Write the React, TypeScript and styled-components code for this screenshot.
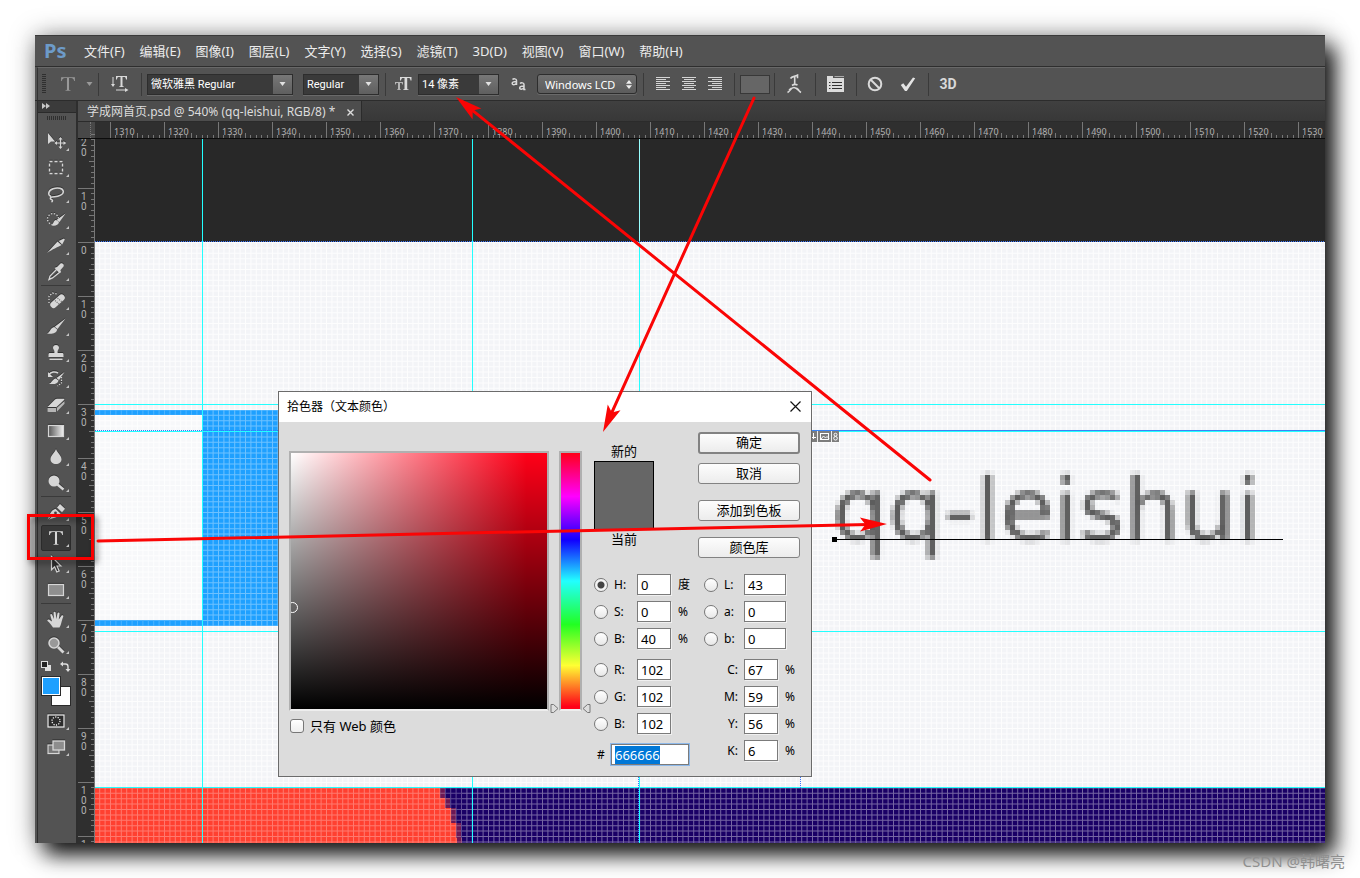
import React, { useEffect, useLayoutEffect, useRef, useState } from "react";
import styled, { createGlobalStyle, css } from "styled-components";

const GlobalStyle = createGlobalStyle`
  *, *::before, *::after { box-sizing: border-box; }
  body { margin: 0; background: #fff; font-family: "Noto Sans", "Noto Sans CJK SC", sans-serif; }
  button, input, select { font: inherit; color: inherit; margin: 0; padding: 0; }
`;

const Page = styled.div`
  display: flex;
  flex-direction: column;
  min-height: 100vh;
  padding: 35px 35px 0;
  overflow: hidden;
`;

const Frame = styled.main`
  position: relative;
  z-index: 0;
  flex: 1;
  display: flex;
  flex-direction: column;
  background: #535353;
  color: #e6e6e6;
  box-shadow: 10px 12px 20px rgba(0, 0, 0, 0.9), 0 0 24px rgba(0, 0, 0, 0.35);
`;

const Footer = styled.footer`
  position: relative;
  height: 35px;
  margin-right: -20px;
  padding-top: 8px;
  text-align: right;
  font-size: 15px;
  line-height: 20px;
  color: #8f8f8f;
`;

/* ---------- menu bar ---------- */

const MenuBar = styled.nav`
  display: flex;
  align-items: center;
  height: 32px;
  padding-left: 9px;
  border-top: 1px solid #3a3a3a;
  border-bottom: 1px solid #2e2e2e;
`;

const Logo = styled.span`
  width: 32px;
  font-size: 20px;
  line-height: 28px;
  font-weight: 700;
  color: #6d9bc9;
`;

const MenuList = styled.div`
  display: flex;
  gap: 15px;
  padding-left: 8px;
`;

const MenuItem = styled.button`
  border: 0;
  background: none;
  font-size: 13px;
  line-height: 20px;
  white-space: nowrap;
  color: #ececec;
`;

/* ---------- options bar ---------- */

const OptionsBar = styled.div`
  display: flex;
  align-items: center;
  height: 33px;
  padding-left: 4px;
  margin-left: 2px;
  border-top: 1px solid #686868;
  border-left: 1px solid #333;
  font-family: Roboto, "Noto Sans CJK SC", sans-serif;
  font-size: 11px;
`;

const Divider = styled.span<{ $l?: number; $r?: number }>`
  width: 1px;
  height: 23px;
  background: #3a3a3a;
  margin-left: ${(p) => p.$l ?? 6}px;
  margin-right: ${(p) => p.$r ?? 6}px;
`;

const IconButton = styled.button<{ $w?: number }>`
  display: flex;
  align-items: center;
  justify-content: center;
  width: ${(p) => p.$w ?? 26}px;
  height: 26px;
  border: 0;
  background: none;
  color: #d8d8d8;
`;

const ComboShell = styled.span<{ $w: number }>`
  position: relative;
  display: block;
  width: ${(p) => p.$w}px;
  height: 21px;
  border: 1px solid #2d2d2d;
  box-shadow: 0 1px 0 #6a6a6a;
  background: #3a3a3a;
  & + & {
    margin-left: 10px;
  }
`;

const ComboSelect = styled.select`
  display: block;
  width: 100%;
  height: 19px;
  padding-left: 3px;
  border: 0;
  border-radius: 0;
  appearance: none;
  background: transparent;
  color: #fff;
  outline: 0;
`;

const ComboArrow = styled.span`
  position: absolute;
  top: 0;
  right: 0;
  bottom: 0;
  display: flex;
  align-items: center;
  justify-content: center;
  width: 19px;
  background: linear-gradient(#777, #5f5f5f);
  pointer-events: none;
`;

const SmoothingSelect = styled(ComboSelect)`
  padding-left: 7px;
  font-family: "Noto Sans", sans-serif;
`;

const SmoothingShell = styled(ComboShell)`
  height: 20px;
  border-radius: 3px;
  background: linear-gradient(#6f6f6f, #5c5c5c);
`;

const SmoothingArrow = styled(ComboArrow)`
  width: 14px;
  background: none;
`;

const ColorChip = styled.button`
  width: 30px;
  height: 19px;
  border: 1px solid #383838;
  background: #666;
`;

const ThreeD = styled.span`
  font-weight: 700;
  font-size: 14px;
`;

/* ---------- tool column ---------- */

const Body = styled.div`
  flex: 1;
  display: flex;
  min-height: 0;
  border-top: 1px solid #2c2c2c;
`;

const ToolColumn = styled.aside`
  display: flex;
  flex-direction: column;
  align-items: stretch;
  width: 41px;
  margin-left: 2px;
  border-left: 1px solid #2e2e2e;
  border-right: 2px solid #2e2e2e;
`;

const ToolHeader = styled.div`
  height: 12px;
  padding: 1px 4px;
  display: flex;
  background: #3b3b3b;
  border-bottom: 1px solid #2a2a2a;
`;

const Grip = styled.div`
  height: 4px;
  width: 19px;
  margin: 3px 9px 9px;
  background: repeating-linear-gradient(90deg, #2f2f2f 0 1px, transparent 1px 2px);
`;

const VGrip = styled.span`
  width: 4px;
  height: 20px;
  margin-right: 3px;
  background: repeating-linear-gradient(#2f2f2f 0 1px, transparent 1px 2px);
`;

const ToolGroup = styled.div`
  display: flex;
  flex-direction: column;
  margin: 0 5px 0 3px;
  & + & {
    border-top: 1px solid #3a3a3a;
    padding-top: 2px;
  }
`;

const ToolButton = styled.button<{ $active?: boolean }>`
  position: relative;
  display: flex;
  align-items: center;
  justify-content: center;
  height: 26px;
  border: 1px solid transparent;
  border-radius: 2px;
  background: none;
  color: #d6d6d6;
  svg { filter: drop-shadow(0 -1px 0 #333); }
  ${(p) =>
    p.$active &&
    css`
      border-color: #2b2b2b;
      background: #383838;
    `}
  &::after {
    content: "";
    position: absolute;
    right: 1px;
    bottom: 3px;
    border-left: 3px solid transparent;
    border-bottom: 3px solid #c4c4c4;
  }
`;

const MiniRow = styled.div`
  display: flex;
  justify-content: space-between;
  height: 18px;
  padding: 3px 5px 0 3px;
`;

const SwatchArea = styled.div`
  position: relative;
  height: 32px;
`;

const Swatch = styled.button<{ $color: string; $front?: boolean }>`
  position: absolute;
  left: ${(p) => (p.$front ? 3 : 13)}px;
  top: ${(p) => (p.$front ? 0 : 10)}px;
  width: 20px;
  height: 20px;
  border: 1px solid #2a2a2a;
  background: ${(p) => p.$color};
  box-shadow: inset 0 0 0 1px #fff;
`;

/* ---------- document ---------- */

const Workspace = styled.section`
  flex: 1;
  min-width: 0;
  display: flex;
  flex-direction: column;
`;

const TabBar = styled.div`
  display: flex;
  height: 21px;
  background: linear-gradient(#404040, #383838);
  border-bottom: 1px solid #2b2b2b;
`;

const Tab = styled.div`
  display: flex;
  align-items: center;
  gap: 12px;
  width: 284px;
  padding: 2px 0 0 9px;
  border-right: 1px solid #2b2b2b;
  background: #4d4d4d;
  font-size: 12px;
  line-height: 18px;
  white-space: nowrap;
  color: #dcdcdc;
`;

const TabClose = styled.button`
  display: flex;
  border: 0;
  background: none;
  color: #ddd;
`;

const RulerRow = styled.div`
  display: flex;
  height: 17px;
  background: #2f2f2f;
  border-bottom: 1px solid #0c0c0c;
`;

const Corner = styled.div`
  width: 17px;
  background: #484848;
  display: flex;
  justify-content: flex-end;
  &::after {
    content: "";
    width: 5px;
    border-left: 1px dotted #777;
    background: linear-gradient(#777, #777) 0 12px / 100% 1px no-repeat;
  }
`;

const HRuler = styled.div`
  flex: 1;
  min-width: 0;
  display: flex;
  overflow: hidden;
  padding-left: 15px;
`;

const HUnit = styled.div`
  position: relative;
  flex: 0 0 54px;
  padding-left: 3px;
  border-left: 1px solid #777;
  font-size: 9px;
  line-height: 20px;
  color: #b2b2b2;
`;

const Ticks = styled.svg`
  position: absolute;
  right: 0;
  bottom: 0;
`;

const DocRow = styled.div`
  flex: 1;
  min-height: 0;
  display: flex;
`;

const VRuler = styled.div`
  contain: size;
  width: 17px;
  overflow: hidden;
  background: #2f2f2f;
  border-right: 1px solid #777;
`;

const VUnit = styled.div`
  position: relative;
  height: 54px;
  padding: 3px 0 0 3px;
  border-top: 1px solid #777;
  font-family: Roboto, sans-serif;
  font-size: 10px;
  line-height: 10px;
  color: #b2b2b2;
  &:first-child { margin-top: -5px; }
  span { display: block; }
`;

const Canvas = styled.div`
  position: relative;
  flex: 1;
  min-width: 0;
  overflow: hidden;
  background: #282828;
`;

const Artwork = styled.svg`
  position: absolute;
  inset: 0;
  width: 100%;
  height: 100%;
`;

/* ---------- colour picker ---------- */

const Dialog = styled.div`
  position: absolute;
  left: 183px;
  top: 252px;
  width: 534px;
  border: 1px solid #6b6b6b;
  background: #dcdcdc;
  color: #000;
  font-size: 12px;
`;

const DialogTitle = styled.header`
  display: flex;
  align-items: center;
  justify-content: space-between;
  height: 30px;
  padding: 0 9px 2px 8px;
  background: #fff;
`;

const CloseButton = styled.button`
  display: flex;
  border: 0;
  background: none;
`;

const DialogBody = styled.div`
  display: flex;
  align-items: flex-start;
  gap: 10px;
  padding: 10px 11px 11px 10px;
`;

const FieldColumn = styled.div`
  flex: none;
  width: 260px;
  padding-top: 19px;
`;

const ColorField = styled.div`
  position: relative;
  height: 260px;
  overflow: hidden;
  border: 2px solid #b0b0b0;
  border-bottom-color: #eee;
  background: linear-gradient(transparent, #000), linear-gradient(90deg, #fff, #ff0018 92%);
`;

const Marker = styled.span`
  position: absolute;
  left: -4px;
  top: 149px;
  width: 11px;
  height: 11px;
  border: 1px solid #fff;
  border-radius: 50%;
`;

const WebOnly = styled.label`
  display: flex;
  align-items: center;
  gap: 6px;
  padding: 6px 0 0 1px;
  font-size: 13px;
  line-height: 18px;
`;

const Check = styled.input`
  appearance: none;
  width: 14px;
  height: 14px;
  border: 1px solid #777;
  border-radius: 3px;
  background: linear-gradient(#fff, #eee);
`;

const HueColumn = styled.div`
  position: relative;
  flex: none;
  width: 23px;
  margin-top: 19px;
`;

const HueBar = styled.div`
  height: 260px;
  border: 2px solid #b0b0b0;
  border-bottom-color: #eee;
  background: linear-gradient(#ff0018, #f0f 17%, #10f 34%, #2ff 50%, #2f2 67%, #ff3 83%, #ff0018 99%);
`;

const HuePointer = styled.svg<{ $right?: boolean }>`
  position: absolute;
  top: 252px;
  left: ${(p) => (p.$right ? 23 : -9)}px;
`;

const Controls = styled.div`
  flex: none;
  width: 208px;
`;

const TopControls = styled.div`
  display: flex;
  justify-content: space-between;
  padding-left: 2px;
  height: 142px;
`;

const Preview = styled.div`
  width: 60px;
  padding-top: 10px;
  text-align: center;
  font-size: 13px;
  line-height: 19px;
`;

const PreviewColor = styled.div`
  height: 69px;
  border: 1px solid #000;
  background: #666;
`;

const ButtonStack = styled.div`
  display: flex;
  flex-direction: column;
  gap: 16px;
  width: 102px;
`;

const ButtonPair = styled.div`
  display: flex;
  flex-direction: column;
  gap: 9px;
`;

const PushButton = styled.button<{ $primary?: boolean }>`
  height: ${(p) => (p.$primary ? 22 : 21)}px;
  padding-bottom: 2px;
  border: ${(p) => (p.$primary ? 2 : 1)}px solid #828282;
  border-radius: 3px;
  background: linear-gradient(#fdfdfd, #ececec);
  font-size: 13px;
  line-height: 16px;
`;

const Channels = styled.div`
  display: flex;
  padding-left: 2px;
`;

const ChannelColumn = styled.div`
  display: flex;
  flex: none;
  flex-direction: column;
  gap: 10px;
  width: 110px;
`;

const ChannelGroup = styled.div`
  display: flex;
  flex-direction: column;
  gap: 6px;
`;

const ChannelRow = styled.div`
  display: flex;
  align-items: center;
  height: 21px;
  line-height: 18px;
  white-space: nowrap;
`;

const Radio = styled.input`
  appearance: none;
  flex: none;
  width: 14px;
  height: 14px;
  border: 1px solid #777;
  border-radius: 50%;
  background: linear-gradient(#fff, #e8e8e8);
  &:checked {
    background: radial-gradient(circle, #444 3px, #f4f4f4 4px);
  }
`;

const ChannelLabel = styled.label<{ $kind: "left" | "lab" | "cmyk" | "hex" }>`
  flex: none;
  width: ${(p) => ({ left: 29, lab: 26, cmyk: 40, hex: 17 })[p.$kind]}px;
  padding: ${(p) => (p.$kind === "cmyk" ? "0 6px 0 0" : p.$kind === "hex" ? "0 0 0 3px" : "0 0 0 6px")};
  text-align: ${(p) => (p.$kind === "cmyk" ? "right" : "left")};
`;

const ValueInput = styled.input<{ $w: number }>`
  flex: none;
  width: ${(p) => p.$w}px;
  height: 21px;
  padding-left: 3px;
  border: 1px solid #7b7b7b;
  box-shadow: 1px 1px 0 #f0f0f0;
  background: #fff;
  outline: 0;
  font-size: 13px;
  &:focus { box-shadow: 0 0 0 1px #8db9ea; }
  &::selection { background: #0078d7; color: #fff; }
`;

const Unit = styled.span`
  padding-left: 7px;
`;

/* ---------- annotation layer ---------- */

const Annotations = styled.svg`
  position: absolute;
  left: 0;
  top: 0;
  overflow: visible;
  pointer-events: none;
`;

const menus = ["文件(F)", "编辑(E)", "图像(I)", "图层(L)", "文字(Y)", "选择(S)", "滤镜(T)", "3D(D)", "视图(V)", "窗口(W)", "帮助(H)"];

const Caret = ({ color = "#e2e2e2" }: { color?: string }) => (
  <svg width="7" height="4" viewBox="0 0 7 4"><path d="M0.5 0h6L3.500 4z" fill={color} /></svg>
);

function Combo({ label, value, width }: { label: string; value: string; width: number }) {
  return (
    <ComboShell $w={width}>
      <ComboSelect aria-label={label} defaultValue={value}><option>{value}</option></ComboSelect>
      <ComboArrow><Caret /></ComboArrow>
    </ComboShell>
  );
}

const AlignIcon = ({ kind }: { kind: "l" | "c" | "r" }) => (
  <svg width="15" height="15" viewBox="0 0 15 15" stroke="#d4d4d4">
    {[14, 10, 14, 10, 14, 10, 14].map((w, i) => {
      const x = kind === "l" ? 0 : kind === "c" ? (14 - w) / 2 : 14 - w;
      return <path key={i} d={`M${x} ${i * 2 + 0.5}h${w}`} strokeWidth="1" />;
    })}
  </svg>
);

const TypeGlyph = ({ size, color = "#d8d8d8" }: { size: number; color?: string }) => (
  <svg width={size} height={size} viewBox="0 0 14 14" fill={color}>
    <path d="M1 1h12v3.400h-.6C12 2.400 11.200 1.800 9.800 1.800H7.900v9.800c0 .7.300.9 1.600 1v.4h-5v-.4c1.300-.1 1.600-.3 1.600-1V1.800H4.200C2.800 1.800 2 2.400 1.600 4.400H1z" />
  </svg>
);

const toolIcons: Record<string, React.ReactNode> = {
  move: (
    <>
      <path d="M2 1v11l3-2.600h4z" fill="currentColor" />
      <path d="M14.500 6v10M9.500 11h10" stroke="currentColor" strokeWidth="1.200" />
      <path d="M14.500 5l-2 2.500h4zM14.500 17l-2-2.500h4zM8.500 11l2.500-2v4zM20 11l-2.500-2v4z" fill="currentColor" />
    </>
  ),
  marquee: <rect x="3.500" y="3.500" width="13" height="12" stroke="currentColor" strokeWidth="1.400" strokeDasharray="3 2" />,
  lasso: (
    <path d="M5 12.500C1.500 11 2 6.500 7 4.800c5-1.700 10-.4 10.300 2.500.3 3-4.500 5.500-9 5.400-2.500 0-4 .2-4 1.600 0 1.500 2 1 2.200 2.200 0 .8-.5 1.200-1 1.500" stroke="currentColor" strokeWidth="1.500" />
  ),
  quick: (
    <>
      <circle cx="7" cy="9" r="5.500" stroke="currentColor" strokeWidth="1.300" strokeDasharray="1.300 1.600" />
      <path d="M19.500 3.500l-6 8.500-3-2zM10 10l3 2c-.5 3.500-4 4-7.500 3.500 2-.8 1.500-5 4.500-5.500z" fill="currentColor" />
    </>
  ),
  slice: <path d="M1 17L11.500 5.500l4 3.500C11 11.500 7 13 1 17zM12.700 5l5.300-2.500.8 1-2.600 5z" fill="currentColor" />,
  dropper: (
    <>
      <path d="M11 7l3 3-7.500 6-3.500 1.500 1-3.500z" stroke="currentColor" strokeWidth="1.400" />
      <path d="M9.500 5.500l1.500-.5 3.500-3.500c2-1 4 1 3 3L14.500 8l.3 2-1.200 1-5-5z" fill="currentColor" />
    </>
  ),
  heal: (
    <>
      <path d="M3 12V5l3.500-3 4.500 1" stroke="currentColor" strokeWidth="1.300" strokeDasharray="1.300 1.600" />
      <rect x="3" y="7" width="17" height="6.500" rx="3" transform="rotate(-42 11.500 10.200)" fill="currentColor" />
      <path d="M9 9.500l4.500 4M11.500 7l4.500 4" stroke="#777" strokeWidth="1.200" strokeDasharray="1.200 1" />
    </>
  ),
  brush: <path d="M19.500 1.500L11.500 12l-2.800-2.300zM8.300 10l2.900 2.500c-.7 4-5.500 4.800-10.200 4 3-.7 3.300-6 7.300-6.500z" fill="currentColor" />,
  stamp: <path d="M10 2c1.900 0 3 1.200 3 2.700 0 1.500-1.400 2.200-1.400 3.800V10H16c1 0 1.500.5 1.500 1.500V14h-15v-2.500C2.500 10.500 3 10 4 10h4.400V8.500C8.400 6.900 7 6.200 7 4.700 7 3.200 8.100 2 10 2zM3.500 15.500h13V17h-13z" fill="currentColor" />,
  history: (
    <>
      <path d="M3 5.500c2-2.500 6-3.500 9-1.500" stroke="currentColor" strokeWidth="1.600" />
      <path d="M2 3v5h5zM18.500 3l-5.500 8-2.500-2zM9.800 9.500l2.700 2c-.8 3.700-5 4-9.500 3.200 3-.7 3.300-4.800 6.800-5.200z" fill="currentColor" />
      <path d="M15.500 8v6l-4 3" stroke="currentColor" strokeWidth="1.200" strokeDasharray="1.300 1.300" />
    </>
  ),
  eraser: (
    <>
      <path d="M1.500 12L9 4.500c.6-.6 1.200-.8 2-.8h6.500c.8 0 1 .7.500 1.300L10.500 12z" fill="currentColor" />
      <path d="M1.500 13h8.500v4H2.500c-.6 0-1-.4-1-.9zM11 12.700L18.500 6v2.800L11 16.500z" fill="#b5b5b5" />
    </>
  ),
  gradient: (
    <>
      <defs><linearGradient id="toolGrad"><stop stopColor="#555" /><stop offset="1" stopColor="#f2f2f2" /></linearGradient></defs>
      <rect x="2.500" y="4.500" width="15" height="11" fill="url(#toolGrad)" stroke="currentColor" strokeWidth="1.200" />
    </>
  ),
  blur: <path d="M10 2c1 3.500 5.500 6.500 5.500 10.200C15.500 15 13 17 10 17s-5.500-2-5.500-4.800C4.500 8.500 9 5.500 10 2z" fill="currentColor" />,
  dodge: (
    <>
      <circle cx="8" cy="8" r="5.500" fill="currentColor" />
      <path d="M11.500 11.500l6 5" stroke="currentColor" strokeWidth="2.400" />
    </>
  ),
  pen: (
    <>
      <path d="M1.500 17.500C4 14 3.500 9 9.500 6.800l5 4.700C12.500 16 7 15.500 3 17.800l5-6" fill="currentColor" />
      <circle cx="9.500" cy="11" r="1.400" fill="#444" />
      <path d="M11 5.500L14 2l5 4.700-3 3.500z" fill="currentColor" />
    </>
  ),
  select: <path d="M5.500 2.500l9.500 9.500h-4l2.200 5-2.400 1-2.200-5.200-3.100 3z" fill="#2f2f2f" stroke="currentColor" strokeWidth="1.200" />,
  shape: <rect x="2.500" y="4.500" width="15" height="11" fill="#8f8f8f" stroke="currentColor" strokeWidth="1.200" />,
  hand: (
    <path d="M7 18.500C5.500 16 3.500 13.500 1.500 12c-.6-1.300 1.200-1.900 2.300-1.100L6 12.500 4.300 6.200c-.2-1.300 1.500-1.600 1.900-.4L8 10l-.4-6.200c0-1.300 1.900-1.300 2.100 0L10.300 10l1.200-5.800c.3-1.200 2.100-1 2 .3L12.800 10.500l2.600-3.700c.7-1 2.200-.3 1.800.9-1.200 3-1.800 6.300-2.500 8.300-.3 1-.8 1.500-1.200 2.500z" fill="currentColor" />
  ),
  zoom: (
    <>
      <circle cx="8" cy="8" r="5" fill="#999" stroke="currentColor" strokeWidth="1.600" />
      <path d="M12 12l5.500 5.500" stroke="currentColor" strokeWidth="2.800" />
    </>
  ),
  mask: (
    <>
      <rect x="2" y="4" width="16" height="12" fill="#2c2c2c" stroke="#eee" strokeWidth="1.200" />
      <circle cx="10" cy="10" r="4" stroke="#eee" strokeWidth="1.300" strokeDasharray="1.200 1.300" />
    </>
  ),
  screen: (
    <>
      <rect x="2" y="8" width="11" height="8.500" fill="#777" stroke="currentColor" strokeWidth="1.200" />
      <rect x="7" y="4" width="11.500" height="9" fill="#8d8d8d" stroke="currentColor" strokeWidth="1.300" />
    </>
  ),
};

function Tool({ name, label, active }: { name: string; label: string; active?: boolean }) {
  return (
    <ToolButton aria-label={label} $active={active}>
      {name === "type" ? (
        <TypeGlyph size={16} />
      ) : (
        <svg width="20" height="20" viewBox="0 0 20 20" fill="none">{toolIcons[name]}</svg>
      )}
    </ToolButton>
  );
}

const UNIT = 54;
const tickOffsets = [5, 11, 16, 22, 27, 32, 38, 43, 49];

function useUnitCount(ref: React.RefObject<HTMLDivElement | null>, axis: "width" | "height", offset: number) {
  const [count, setCount] = useState(0);
  useLayoutEffect(() => {
    const el = ref.current;
    if (!el) return;
    const measure = () => setCount(Math.max(0, Math.ceil((el.getBoundingClientRect()[axis] - offset) / UNIT)));
    measure();
    const observer = new ResizeObserver(measure);
    observer.observe(el);
    return () => observer.disconnect();
  }, [ref, axis, offset]);
  return count;
}

function HorizontalRuler() {
  const ref = useRef<HTMLDivElement>(null);
  const count = useUnitCount(ref, "width", 15);
  return (
    <HRuler ref={ref}>
      {Array.from({ length: count }, (_, i) => (
        <HUnit key={i}>
          {1310 + i * 10}
          <Ticks width="53" height="5" stroke="#777">
            {tickOffsets.map((t) => <path key={t} d={`M${t - 0.5} ${t === 27 ? 0 : 2}v5`} />)}
          </Ticks>
        </HUnit>
      ))}
    </HRuler>
  );
}

function VerticalRuler() {
  const ref = useRef<HTMLDivElement>(null);
  const count = useUnitCount(ref, "height", -5);
  return (
    <VRuler ref={ref}>
      {Array.from({ length: count }, (_, i) => (
        <VUnit key={i}>
          {String(Math.abs(i * 10 - 20)).split("").map((d, k) => <span key={k}>{d}</span>)}
          <Ticks width="5" height="53" stroke="#777">
            {tickOffsets.map((t) => <path key={t} d={`M${t === 27 ? 0 : 2} ${t - 0.5}h5`} />)}
          </Ticks>
        </VUnit>
      ))}
    </VRuler>
  );
}

function Artboard() {
  const steps = [440, 440, 445, 445, 451, 451, 451, 456, 456, 456, 457];
  return (
    <Artwork>
      <defs>
        <pattern id="grid" x="110" y="242" width="27" height="27" patternUnits="userSpaceOnUse">
          {[0, 5.4, 10.8, 16.2, 21.6].map((p) => (
            <path key={p} d={`M${p} 0h1v27h-1zM0 ${p}h27v1H0z`} fill="#fff" />
          ))}
        </pattern>
        <filter id="pixels" filterUnits="userSpaceOnUse" x="830" y="460" width="470" height="110" colorInterpolationFilters="sRGB">
          <feGaussianBlur in="SourceGraphic" stdDeviation="1.500" result="soft" />
          <feFlood x="832" y="462" width="1" height="1" floodColor="#000" />
          <feComposite x="830" y="460" width="5" height="5" />
          <feTile result="dots" />
          <feComposite in="soft" in2="dots" operator="in" />
          <feMorphology operator="dilate" radius="2" />
        </filter>
      </defs>
      <g transform="translate(-95 -139)">
        <rect x="95" y="242" width="4000" height="546" fill="#f3f4f7" />
        <rect x="95" y="415" width="107" height="205" fill="#f7f8fa" />
        <rect x="95" y="242" width="4000" height="546" fill="url(#grid)" opacity="0.8" />
        <g fill="#1ea0ff">
          <rect x="95" y="410" width="107" height="5" />
          <rect x="95" y="620" width="107" height="6" />
          <rect x="202" y="410" width="108" height="216" />
        </g>
        <rect x="95" y="788" width="4000" height="400" fill="#1a0066" />
        {steps.map((x, i) => (
          <React.Fragment key={i}>
            <rect x="95" y={788 + i * 5} width={x - 95} height="5" fill="#ff4030" />
            <rect x={x} y={788 + i * 5} width="5" height="5" fill="#6d1854" />
          </React.Fragment>
        ))}
        <rect x="95" y="410" width="107" height="5" fill="url(#grid)" opacity="0.200" />
        <rect x="95" y="620" width="107" height="6" fill="url(#grid)" opacity="0.200" />
        <rect x="202" y="410" width="108" height="216" fill="url(#grid)" opacity="0.350" />
        <rect x="95" y="788" width="367" height="400" fill="url(#grid)" opacity="0.300" />
        <rect x="462" y="788" width="4000" height="400" fill="url(#grid)" opacity="0.400" />
        <g stroke="#2ff">
          <path d="M202.500 139v1100M472.500 139v1100M639.500 242v1000M95 404.500h4000M95 431.500h4000M95 631.500h4000M95 787.500h4000" />
        </g>
        <path d="M639.500 139v103" stroke="#9ff" />
        <g stroke="#3a78ff" strokeDasharray="1 1">
          <path d="M95 241.500h4000M95 430.500h184M638.500 777v400M800.500 777v11" />
        </g>
        <path d="M812 430.500h3000" stroke="#3a84f5" />
        <g>
          <rect x="808" y="431" width="31" height="11" fill="#7d7d7d" />
          <path d="M817.500 431v11M831.500 431v11" stroke="#eee" />
          <rect x="820.500" y="433.500" width="8" height="6" fill="none" stroke="#fff" />
          <path d="M821 439l2.500-3 2 2 1.500-1.500 2 2" stroke="#fff" fill="none" />
          <path d="M813.500 433v6M812 437.500h4" stroke="#fff" />
          <ellipse cx="835.500" cy="434.700" rx="1.500" ry="1.500" fill="none" stroke="#fff" />
          <ellipse cx="835.500" cy="438.300" rx="1.800" ry="1.800" fill="none" stroke="#fff" />
        </g>
        <text x="832" y="540" fontFamily="DejaVu Sans, sans-serif" fontSize="88" fill="#5c5c5c" filter="url(#pixels)">qq-leishui</text>
        <rect x="832" y="537" width="5" height="5" fill="#000" />
        <path d="M834 539.500h449" stroke="#000" />
      </g>
    </Artwork>
  );
}

type ChannelProps = {
  id: string;
  label: string;
  value: string;
  unit?: string;
  kind: "left" | "lab" | "cmyk";
  checked?: boolean;
};

function Channel({ id, label, value, unit, kind, checked }: ChannelProps) {
  return (
    <ChannelRow>
      {kind !== "cmyk" && <Radio type="radio" name="channel" aria-label={label} defaultChecked={checked} />}
      <ChannelLabel $kind={kind} htmlFor={id}>{label}</ChannelLabel>
      <ValueInput id={id} $w={kind === "lab" ? 42 : 34} defaultValue={value} />
      {unit && <Unit>{unit}</Unit>}
    </ChannelRow>
  );
}

function ColorPicker() {
  const hex = useRef<HTMLInputElement>(null);
  useEffect(() => {
    hex.current?.focus();
    hex.current?.select();
  }, []);
  return (
    <Dialog role="dialog" aria-label="拾色器">
      <DialogTitle>
        <span>拾色器（文本颜色）</span>
        <CloseButton aria-label="关闭">
          <svg width="13" height="13" viewBox="0 0 13 13" stroke="#111" strokeWidth="1.200"><path d="M1.500 1.500l10 10M11.500 1.500l-10 10" /></svg>
        </CloseButton>
      </DialogTitle>
      <DialogBody>
        <FieldColumn>
          <ColorField><Marker /></ColorField>
          <WebOnly><Check type="checkbox" />只有 Web 颜色</WebOnly>
        </FieldColumn>
        <HueColumn>
          <HueBar />
          <HuePointer width="9" height="11" viewBox="0 0 9 11"><path d="M1 1.500h2.500L8 5.500 3.500 9.500H1z" fill="#ddd" stroke="#777" /></HuePointer>
          <HuePointer $right width="9" height="11" viewBox="0 0 9 11"><path d="M8 1.500H5.500L1 5.500l4.500 4H8z" fill="#ddd" stroke="#777" /></HuePointer>
        </HueColumn>
        <Controls>
          <TopControls>
            <Preview>新的<PreviewColor />当前</Preview>
            <ButtonStack>
              <ButtonPair>
                <PushButton $primary>确定</PushButton>
                <PushButton>取消</PushButton>
              </ButtonPair>
              <PushButton>添加到色板</PushButton>
              <PushButton>颜色库</PushButton>
            </ButtonStack>
          </TopControls>
          <Channels>
            <ChannelColumn>
              <ChannelGroup>
                <Channel id="hsb-h" label="H:" value="0" unit="度" kind="left" checked />
                <Channel id="hsb-s" label="S:" value="0" unit="%" kind="left" />
                <Channel id="hsb-b" label="B:" value="40" unit="%" kind="left" />
              </ChannelGroup>
              <ChannelGroup>
                <Channel id="rgb-r" label="R:" value="102" kind="left" />
                <Channel id="rgb-g" label="G:" value="102" kind="left" />
                <Channel id="rgb-b" label="B:" value="102" kind="left" />
              </ChannelGroup>
              <ChannelRow>
                <ChannelLabel $kind="hex" htmlFor="hex">#</ChannelLabel>
                <ValueInput id="hex" ref={hex} $w={78} defaultValue="666666" />
              </ChannelRow>
            </ChannelColumn>
            <ChannelColumn>
              <ChannelGroup>
                <Channel id="lab-l" label="L:" value="43" kind="lab" />
                <Channel id="lab-a" label="a:" value="0" kind="lab" />
                <Channel id="lab-b" label="b:" value="0" kind="lab" />
              </ChannelGroup>
              <ChannelGroup>
                <Channel id="cmyk-c" label="C:" value="67" unit="%" kind="cmyk" />
                <Channel id="cmyk-m" label="M:" value="59" unit="%" kind="cmyk" />
                <Channel id="cmyk-y" label="Y:" value="56" unit="%" kind="cmyk" />
                <Channel id="cmyk-k" label="K:" value="6" unit="%" kind="cmyk" />
              </ChannelGroup>
            </ChannelColumn>
          </Channels>
        </Controls>
      </DialogBody>
    </Dialog>
  );
}

function Arrow({ x1, y1, x2, y2 }: { x1: number; y1: number; x2: number; y2: number }) {
  const angle = (Math.atan2(y2 - y1, x2 - x1) * 180) / Math.PI;
  const length = Math.hypot(x2 - x1, y2 - y1);
  return (
    <g transform={`translate(${x1} ${y1}) rotate(${angle})`}>
      <path d={`M0 0H${length - 18}`} stroke="#fa0505" strokeWidth="3" strokeLinecap="round" />
      <path d={`M${length} 0l-27-7 5.500 7-5.500 7z`} fill="#fa0505" />
    </g>
  );
}

function Options() {
  return (
    <OptionsBar>
      <VGrip />
      <IconButton aria-label="文字工具" $w={37}><TypeGlyph size={16} color="#999" /></IconButton>
      <Caret color="#999" />
      <Divider $l={5} $r={8} />
      <IconButton aria-label="切换文本取向">
        <svg width="18" height="18" viewBox="0 0 18 18" fill="#dadada">
          <path d="M5 1h11v3.500h-1C14.700 2.500 14.300 2 13 2h-1.500v8.500c0 .8.500 1 1.500 1v.5H8v-.5c1 0 1.500-.2 1.500-1V2h-1.500C6.700 2 6.200 2.500 6 4.500H5z" />
          <path d="M1.500 2h1v7H4l-2 3-2-3h1.500zM5 14.500h9V13l3.500 2L14 17v-1.500H5z" />
        </svg>
      </IconButton>
      <Divider $l={8} $r={5} />
      <Combo label="字体" value="微软雅黑 Regular" width={146} />
      <Combo label="字形" value="Regular" width={76} />
      <Divider $l={6} $r={2} />
      <IconButton aria-label="字体大小" $w={30}>
        <svg width="17" height="16" viewBox="0 0 17 16" fill="#dadada">
          <path d="M5 1h11.500v3.500h-1c-.2-2-.8-2.500-2-2.500h-1.300v10.500c0 .8.500 1 1.500 1v.5H8v-.5c1 0 1.500-.2 1.500-1V2H8.200C7 2 6.300 2.500 6 4.500H5z" />
          <path d="M0 6h8v2.500h-.8C7 7.300 6.700 7 6 7h-1v5.500c0 .7.300 1 1 1v.5H2v-.5c.7 0 1-.3 1-1V7H2C1.200 7 1 7.300.8 8.500H0z" fill="#b5b5b5" />
        </svg>
      </IconButton>
      <Combo label="字号" value="14 像素" width={81} />
      <IconButton as="span" $w={38}>
        <svg width="15" height="14" viewBox="0 0 15 14" fill="none" stroke="#dadada" strokeWidth="1.500">
          <path d="M1.500 2.500C2.500 1.500 5.500 1.500 5.500 3.500V8M5.500 4.500C3.500 4.500 1.200 5 1.200 6.500s3 1.800 4.300-.5" />
          <path d="M9 6.500c1-1 4-1 4 1V12.500h1.500M13 9c-2 0-4.300.3-4.300 2s3 1.800 4.300-.5" />
        </svg>
      </IconButton>
      <SmoothingShell $w={100}>
        <SmoothingSelect aria-label="消除锯齿" defaultValue="Windows LCD"><option>Windows LCD</option></SmoothingSelect>
        <SmoothingArrow>
          <svg width="6" height="9" viewBox="0 0 6 9" fill="#eee"><path d="M0 3.800h6L3 0zM0 5.200h6L3 9z" /></svg>
        </SmoothingArrow>
      </SmoothingShell>
      <Divider $l={6} $r={6} />
      <IconButton aria-label="左对齐"><AlignIcon kind="l" /></IconButton>
      <IconButton aria-label="居中"><AlignIcon kind="c" /></IconButton>
      <IconButton aria-label="右对齐"><AlignIcon kind="r" /></IconButton>
      <Divider $l={6} $r={5} />
      <ColorChip aria-label="文本颜色" />
      <Divider $l={4} $r={6} />
      <IconButton aria-label="文字变形">
        <svg width="16" height="20" viewBox="0 0 16 20" fill="none" stroke="#dadada" strokeWidth="1.600">
          <path d="M4.500 4.500C6 1.800 9 3 11.500 1.200v3M8.700 3v7.500M6 11.500c2-1.500 3.500-1.500 5.500-.5M1.500 18.500C4 17 5 13.500 8 13.500s4.500 3.500 7 5M3 16l2.500-2M13 16l-2.500-2" />
        </svg>
      </IconButton>
      <Divider $l={8} $r={6} />
      <IconButton aria-label="字符面板">
        <svg width="17" height="18" viewBox="0 0 17 18">
          <path d="M0 1h6v2h11v14H0z" fill="#dcdcdc" /><path d="M7.500 1H17v1H7.500z" fill="#aaa" />
          <path d="M2 7.500h1.500M5 7.500h10M2 10.500h1.500M5 10.500h10M2 13.500h1.500M5 13.500h10" stroke="#333" strokeWidth="1.200" />
        </svg>
      </IconButton>
      <Divider $l={8} $r={5} />
      <IconButton aria-label="取消编辑">
        <svg width="16" height="16" viewBox="0 0 16 16" fill="none" stroke="#dadada" strokeWidth="2"><circle cx="8" cy="8" r="6.300" /><path d="M3.500 3.500l9 9" /></svg>
      </IconButton>
      <IconButton aria-label="提交编辑" $w={40}>
        <svg width="16" height="16" viewBox="0 0 16 16" fill="#e4e4e4"><path d="M.8 9l2.500-1.700L6 10.800 13 1.500l2.200.8L6.800 15H5z" /></svg>
      </IconButton>
      <Divider $l={0} $r={6} />
      <IconButton aria-label="3D"><ThreeD>3D</ThreeD></IconButton>
    </OptionsBar>
  );
}

export default function App() {
  return (
    <Page>
      <GlobalStyle />
      <Frame>
        <MenuBar>
          <Logo>Ps</Logo>
          <MenuList>{menus.map((m) => <MenuItem key={m}>{m}</MenuItem>)}</MenuList>
        </MenuBar>
        <Options />
        <Body>
          <ToolColumn>
            <ToolHeader>
              <svg width="8" height="8" viewBox="0 0 8 8" fill="#c8c8c8"><path d="M0 1l4 3-4 3zM4 1l4 3-4 3z" /></svg>
            </ToolHeader>
            <Grip />
            <ToolGroup>
              <Tool name="move" label="移动" />
              <Tool name="marquee" label="选框" />
              <Tool name="lasso" label="套索" />
              <Tool name="quick" label="快速选择" />
              <Tool name="slice" label="切片" />
              <Tool name="dropper" label="吸管" />
            </ToolGroup>
            <ToolGroup>
              <Tool name="heal" label="修复画笔" />
              <Tool name="brush" label="画笔" />
              <Tool name="stamp" label="图章" />
              <Tool name="history" label="历史记录画笔" />
              <Tool name="eraser" label="橡皮擦" />
              <Tool name="gradient" label="渐变" />
              <Tool name="blur" label="模糊" />
              <Tool name="dodge" label="减淡" />
            </ToolGroup>
            <ToolGroup>
              <Tool name="pen" label="钢笔" />
              <Tool name="type" label="文字" active />
              <Tool name="select" label="路径选择" />
              <Tool name="shape" label="矩形" />
            </ToolGroup>
            <ToolGroup>
              <Tool name="hand" label="抓手" />
              <Tool name="zoom" label="缩放" />
            </ToolGroup>
            <MiniRow>
              <svg width="10" height="10" viewBox="0 0 10 10"><rect x="4" y="4" width="6" height="6" fill="#ddd" /><rect x="0.500" y="0.500" width="6" height="6" fill="#222" stroke="#ddd" /></svg>
              <svg width="11" height="11" viewBox="0 0 11 11" fill="none" stroke="#ddd" strokeWidth="1.400"><path d="M2 3h3.500C7.500 3 8 4 8 5.500V9" /><path d="M3 .5V5.500L0 3zM5.500 8h5L8 11z" fill="#ddd" stroke="none" /></svg>
            </MiniRow>
            <SwatchArea>
              <Swatch $color="#fff" aria-label="背景色" />
              <Swatch $color="#1ea0ff" $front aria-label="前景色" />
            </SwatchArea>
            <ToolGroup>
              <Tool name="mask" label="快速蒙版" />
              <Tool name="screen" label="屏幕模式" />
            </ToolGroup>
          </ToolColumn>
          <Workspace>
            <TabBar>
              <Tab>
                <span>学成网首页.psd @ 540% (qq-leishui, RGB/8) *</span>
                <TabClose aria-label="关闭文档">
                  <svg width="7" height="7" viewBox="0 0 7 7" stroke="currentColor" strokeWidth="1.400"><path d="M.5.5l6 6M6.500.5l-6 6" /></svg>
                </TabClose>
              </Tab>
            </TabBar>
            <RulerRow>
              <Corner />
              <HorizontalRuler />
            </RulerRow>
            <DocRow>
              <VerticalRuler />
              <Canvas>
                <Artboard />
                <ColorPicker />
              </Canvas>
            </DocRow>
          </Workspace>
        </Body>
        <Annotations width="1" height="1" fill="none">
          <defs>
            <filter id="boxShadow" x="-20%" y="-20%" width="150%" height="150%">
              <feDropShadow dx="3" dy="3" stdDeviation="3" floodOpacity="0.600" />
            </filter>
          </defs>
          <g transform="translate(-35 -35)">
            <rect x="28.500" y="515.500" width="64" height="43" stroke="#fa0505" strokeWidth="3" filter="url(#boxShadow)" />
            <Arrow x1={930} y1={480} x2={456} y2={97} />
            <Arrow x1={754} y1={98} x2={603} y2={432} />
            <Arrow x1={98} y1={541} x2={887} y2={524} />
          </g>
        </Annotations>
      </Frame>
      <Footer>CSDN @韩曙亮</Footer>
    </Page>
  );
}
